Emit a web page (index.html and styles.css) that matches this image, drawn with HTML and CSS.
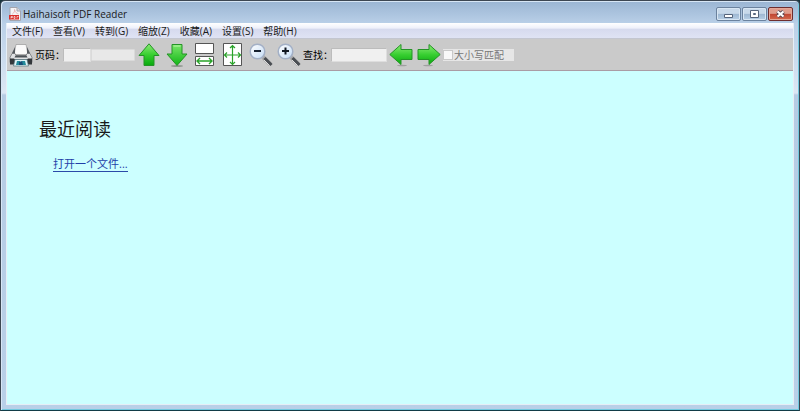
FILE: index.html
```html
<!DOCTYPE html>
<html lang="zh-CN">
<head>
<meta charset="utf-8">
<title>Haihaisoft PDF Reader</title>
<link rel="stylesheet" href="styles.css">
</head>
<body>
<div class="window">
  <header class="titlebar">
    <svg class="app-icon" viewBox="0 0 12 14" aria-hidden="true">
      <path d="M1 .5h7L11.500 4v9.500H1z" fill="#f4f4f6" stroke="#a4a4ad"/>
      <path d="M8 .5V4h3.500" fill="#d4d5dc" stroke="#a4a4ad"/>
      <path d="M3 7.500C5 6 6 4 5.500 2.500 6 5 7.500 6.500 9.500 7" fill="none" stroke="#d99" stroke-width=".6"/>
      <path d="M0 8h10v4.500H0z" fill="#d92f2b"/>
      <path d="M2 11.500v-2h1.500v1H2M5 9.500v2h1v-2zM8 11.500v-2h1.500" fill="none" stroke="#fff" stroke-width=".6"/>
    </svg>
    <h1 class="title">Haihaisoft PDF Reader</h1>
    <div class="controls">
      <button class="control" aria-label="最小化"><svg viewBox="0 0 23 12"><path d="M7.500 6.500h8v3h-8z" fill="#fff" stroke="#56657c"/></svg></button>
      <button class="control" aria-label="最大化"><svg viewBox="0 0 23 12"><path fill-rule="evenodd" d="M7.500 2.500h8v7h-8zM10.500 5.500v1h2v-1z" fill="#fff" stroke="#56657c"/></svg></button>
      <button class="control close" aria-label="关闭"><svg viewBox="0 0 23 12"><path d="M8.500 3.500l6 5M14.500 3.500l-6 5" stroke="#584653" stroke-width="4"/><path d="M8.500 3.500l6 5M14.500 3.500l-6 5" stroke="#fff" stroke-width="2.200"/></svg></button>
    </div>
  </header>
  <div class="body">
    <nav class="menubar">
      <button>文件(F)</button>
      <button>查看(V)</button>
      <button>转到(G)</button>
      <button>缩放(Z)</button>
      <button>收藏(A)</button>
      <button>设置(S)</button>
      <button>帮助(H)</button>
    </nav>
    <div class="toolbar">
      <button class="tool" aria-label="打印">
        <svg viewBox="0 0 24 24">
          <path d="M7 1.500h10l2 10H5z" fill="#fafafa" stroke="#999" stroke-width=".7"/>
          <path d="M6 4L3 10v3h3zM18 4l3 6v3h-3z" fill="#565b60"/>
          <path d="M3 10.500h3l1 2h10l1-2h3l2 4v5H1v-5z" fill="#dfe1e3" stroke="#686b6e" stroke-width=".7"/>
          <path d="M6.500 12.500h11l1 2h-13z" fill="#4c5257"/>
          <path d="M1 15.500h4l1 1h12l1-1h4v6h-4l-1-3H6l-1 3H1z" fill="#33373b"/>
          <path d="M6 16.500h12l1.500 6.500h-15z" fill="#e0f4f7" stroke="#517078" stroke-width=".7"/>
          <path d="M8 18h3l1 4H7zM13 18h3l1 4h-4z" fill="#238a9a"/>
          <path d="M10 19l3-1 1 4h-4z" fill="#174d76"/>
        </svg>
      </button>
      <label class="caption" for="page">页码：</label>
      <input class="field page" id="page" type="text">
      <output class="total" for="page"></output>
      <button class="tool" aria-label="上一页">
        <svg viewBox="0 0 24 24"><use href="#arrow-up"/></svg>
      </button>
      <button class="tool" aria-label="下一页">
        <svg viewBox="0 0 24 24"><ellipse cx="12" cy="23" rx="6" ry="1" fill="#909690"/><g transform="rotate(180 12 12)"><path d="M12 1.500L22 13h-5v9.500H7V13H2z" fill="url(#green-flip)" stroke="#259327"/></g><path d="M8.500 3h7" stroke="#b8f7a8"/></svg>
      </button>
      <button class="tool" aria-label="适合宽度">
        <svg viewBox="0 0 24 24">
          <path d="M2.500 .5h18v10h-18zM2.500 13.500h18v9h-18z" fill="#fff" stroke="#555"/>
          <path d="M4 18h15M7 15l-3 3 3 3M16 15l3 3-3 3" fill="none" stroke="#29a329" stroke-width="1.400"/>
        </svg>
      </button>
      <button class="tool" aria-label="适合页面">
        <svg viewBox="0 0 24 24">
          <path d="M2.500 .5h18v22h-18z" fill="#fff" stroke="#555"/>
          <path d="M3.500 12h16M11.500 2.500v19M6 9.500L3.500 12 6 14.500M17 9.500l2.500 2.500-2.500 2.500M9 5l2.500-2.500L14 5M9 19l2.500 2.500L14 19" fill="none" stroke="#29a329" stroke-width="1.200"/>
        </svg>
      </button>
      <button class="tool" aria-label="缩小">
        <svg viewBox="0 0 24 24"><use href="#lens"/><path d="M5 8h7" stroke="#152030" stroke-width="2"/></svg>
      </button>
      <button class="tool" aria-label="放大">
        <svg viewBox="0 0 24 24"><use href="#lens"/><path d="M5 8h7M8.500 4.500v7" stroke="#101722" stroke-width="2"/></svg>
      </button>
      <label class="caption" for="find">查找：</label>
      <input class="field find" id="find" type="text">
      <button class="tool" aria-label="查找上一个">
        <svg viewBox="0 0 24 24"><ellipse cx="13" cy="22.500" rx="5" ry=".8" fill="#a0a0a0"/><use href="#arrow-left"/></svg>
      </button>
      <button class="tool" aria-label="查找下一个">
        <svg viewBox="0 0 24 24"><ellipse cx="11" cy="22.500" rx="5" ry=".8" fill="#a0a0a0"/><g transform="matrix(-1 0 0 1 24 0)"><use href="#arrow-left"/></g></svg>
      </button>
      <label class="match"><input type="checkbox" disabled><span>大小写匹配</span></label>
    </div>
    <main class="document">
      <h2>最近阅读</h2>
      <a href="#open">打开一个文件...</a>
    </main>
  </div>
</div>
<svg class="symbols" aria-hidden="true">
  <defs>
    <linearGradient id="green" x2="0" y2="1"><stop stop-color="#8deb76"/><stop offset=".5" stop-color="#39cf32"/><stop offset="1" stop-color="#08a90d"/></linearGradient>
    <linearGradient id="green-flip" x2="0" y2="1"><stop stop-color="#10b516"/><stop offset="1" stop-color="#79e668"/></linearGradient>
    <linearGradient id="glass" x2="1" y2="1"><stop stop-color="#fff"/><stop offset="1" stop-color="#c4dcf6"/></linearGradient>
    <path id="arrow-up" d="M12 .8L22 12.500h-5v10H7v-10H2z" fill="url(#green)" stroke="#259327"/>
    <path id="arrow-left" d="M.8 11.500L12 1.500v5h11v10H12v5z" fill="url(#green)" stroke="#259327"/>
    <g id="lens">
      <path d="M14 14l7.500 7.500" stroke="#aaa" stroke-width="4.500"/>
      <path d="M15.500 15l7 7" stroke="#4a4e53" stroke-width="3"/>
      <path d="M15 17l5.500 5.500" stroke="#dedede"/>
      <circle cx="8.500" cy="8.500" r="7.300" fill="url(#glass)" stroke="#a3b0c6" stroke-width="1.500"/>
    </g>
  </defs>
</svg>
</body>
</html>
```
FILE: styles.css
```css
* { box-sizing: border-box; }

body {
  margin: 0;
  background: #17343c;
  font: 10px/14px "Open Sans", "Noto Sans CJK SC", sans-serif;
  color: #1a1a1a;
}

button {
  padding: 0;
  border: 0;
  background: none;
  font: inherit;
  color: inherit;
}

.window {
  display: flex;
  flex-direction: column;
  min-height: 100vh;
  padding: 0 5px 5px;
  border: 1px solid #3c4652;
  border-bottom-color: #123c48;
  border-radius: 5px 5px 0 0;
  background: linear-gradient(#9ab5d3, #bad0e8 23px, #dce7f4 92px, #b6cce4 94px, #b9d0e8);
  box-shadow: inset 1px 1px #d7e6f5, inset -1px -1px #72c9df;
}

.titlebar {
  display: flex;
  align-items: center;
  height: 22px;
  padding: 4px 1px 0 3px;
}

.app-icon { width: 12px; height: 14px; }

.title {
  flex: 1;
  margin: 0 0 0 2px;
  font-size: 10px;
  font-weight: 400;
}

.controls { display: flex; gap: 1px; }

.control {
  width: 25px;
  height: 14px;
  border: 1px solid #6b829e;
  border-radius: 2px;
  background: linear-gradient(#c8d9ea 45%, #9db7d2 50%, #b9d0e6);
  box-shadow: inset 0 0 0 1px #d8e6f3;
}

.control svg { display: block; width: 23px; height: 12px; }

.close {
  border-color: #6e2d2e;
  background: linear-gradient(#df9c8c 45%, #c04532 50%, #d5694d);
  box-shadow: inset 0 0 0 1px #e4a797;
}

.body {
  display: flex;
  flex: 1;
  flex-direction: column;
  border: 1px solid #e6eef6;
  border-top: 0;
}

.menubar {
  display: flex;
  gap: 10px;
  height: 16px;
  padding: 0 5px;
  background: linear-gradient(#fff, #eef0fa 35%, #d6daee 40%, #dfe3f4);
  border-bottom: 1px solid #c3c6d0;
}

.toolbar {
  display: flex;
  align-items: center;
  height: 32px;
  background: #cacaca;
  border-bottom: 1px solid #a99ca4;
}

.tool { width: 28px; height: 24px; }
.tool svg { display: block; width: 24px; height: 24px; margin: 0 auto; }

.caption { width: 28px; white-space: nowrap; color: #000; }

.field,
.total {
  height: 14px;
  padding: 0 2px;
  border: 1px solid #dadada;
  border-radius: 1px;
  background: #f0f0f0;
  font: inherit;
}

.field { border-color: #bcbcbc #dedede #dedede #bcbcbc; }
.page { width: 28px; }
.total { width: 44px; height: 12px; background: #e8e8e8; }
.find { width: 56px; }

.match {
  display: flex;
  align-items: center;
  width: 71px;
  height: 12px;
  background: #e6e6e6;
  color: #777;
}

.match input {
  appearance: none;
  width: 10px;
  height: 10px;
  margin: 0 1px 0 0;
  border: 1px solid #c9c9c9;
  background: #f8f8f8;
}

.document {
  flex: 1;
  padding: 46px 32px;
  background: #cff;
}

h2 {
  margin: 0 0 16px;
  font-size: 18px;
  font-weight: 400;
  line-height: 24px;
}

a {
  display: inline-block;
  margin-left: 14px;
  border-bottom: 1px solid #2b4aa8;
  font-size: 11px;
  line-height: 14px;
  color: #1f3fa8;
  text-decoration: none;
}

.symbols { position: absolute; width: 0; height: 0; }
```
